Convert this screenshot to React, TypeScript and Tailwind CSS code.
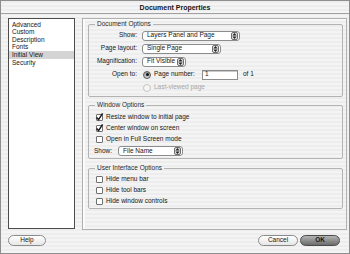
import React from "react";

const font = "font-['Liberation_Sans',Arial,sans-serif]";

const sections = ["Advanced", "Custom", "Description", "Fonts", "Initial View", "Security"];

function Arrows() {
  return (
    <span className="ml-auto mr-[1px] flex h-[8px] w-[7px] items-center justify-center rounded-[2px] border border-[#6e6e6e] bg-[#e2e2e2]">
      <svg width="5" height="6" viewBox="0 0 5 6">
        <path d="M2.5 0L4.6 2.4H0.4Z M2.5 6L0.4 3.6H4.6Z" fill="#222" />
      </svg>
    </span>
  );
}

function Popup({ label, w }: { label: string; w: string }) {
  return (
    <div className={`flex h-[10px] items-center rounded-[3px] border border-[#8c8c8c] bg-white pl-[4px] ${w}`}>
      <span>{label}</span>
      <Arrows />
    </div>
  );
}

function Check({ on, label }: { on?: boolean; label: string }) {
  return (
    <div className="flex h-[11px] items-center">
      <span className="flex h-[7px] w-[7px] items-center justify-center rounded-[1px] border border-[#707070] bg-white">
        {on && (
          <svg width="7" height="7" viewBox="0 0 7 7" className="overflow-visible">
            <path d="M0.6 3.4L2.6 5.6L6.6 -0.6" fill="none" stroke="#1a1a1a" strokeWidth="1.5" />
          </svg>
        )}
      </span>
      <span className="ml-[3px]">{label}</span>
    </div>
  );
}

function Radio({ on, disabled }: { on?: boolean; disabled?: boolean }) {
  return (
    <span
      className={`flex h-[8px] w-[8px] items-center justify-center rounded-full border ${
        disabled ? "border-[#c4c4c4] bg-[#f6f6f6]" : "border-[#5a5a5a] bg-linear-to-b from-[#9c9c9c] to-[#d0d0d0]"
      }`}
    >
      {on && <span className="h-[3px] w-[3px] rounded-full bg-[#111]" />}
    </span>
  );
}

function Group({ title, className, children }: { title: string; className: string; children: React.ReactNode }) {
  return (
    <fieldset className={`ml-[5px] w-[255px] rounded-[2px] border border-[#b3b3b3] ${className}`}>
      <legend className="ml-[6px] px-[2px] leading-[8px] text-[#2a2a2a]">{title}</legend>
      {children}
    </fieldset>
  );
}

export default function App() {
  return (
    <div
      className={`${font} h-[254px] w-[350px] overflow-hidden border border-[#8e8e8e] bg-[image:repeating-linear-gradient(180deg,#ededed_0px,#ededed_2px,#f4f4f4_2px,#f4f4f4_4px)] text-[6.5px] leading-none text-[#161616]`}
    >
      <div className="flex h-[13px] items-center justify-center border-b border-[#a0a0a0] text-[7px] font-bold">
        Document Properties
      </div>

      <div className="mt-[4px] flex pl-[7px]">
        <div className="h-[211px] w-[67px] border border-[#4c4c4c] bg-white pt-[2px]">
          {sections.map((s) => (
            <div
              key={s}
              className={`flex h-[7.6px] items-center pl-[3px] ${s === "Initial View" ? "bg-[#d4d4d4]" : ""}`}
            >
              {s}
            </div>
          ))}
        </div>

        <div className="ml-[7px] h-[212px] w-[265px] border border-[#b0b0b0] pt-[1px] shadow-[inset_2px_1px_0_#fbfbfb]">
          <Group title="Document Options" className="pb-[2px]">
            <div className="mt-[1px] flex flex-col">
              <div className="flex h-[13px] items-center">
                <span className="w-[48px] text-right">Show:</span>
                <span className="ml-[5px]">
                  <Popup label="Layers Panel and Page" w="w-[98px]" />
                </span>
              </div>
              <div className="flex h-[13px] items-center">
                <span className="w-[48px] text-right">Page layout:</span>
                <span className="ml-[5px]">
                  <Popup label="Single Page" w="w-[79px]" />
                </span>
              </div>
              <div className="flex h-[13px] items-center">
                <span className="w-[48px] text-right">Magnification:</span>
                <span className="ml-[5px]">
                  <Popup label="Fit Visible" w="w-[44px]" />
                </span>
              </div>
              <div className="flex h-[13px] items-center">
                <span className="w-[48px] text-right">Open to:</span>
                <span className="ml-[6px]">
                  <Radio on />
                </span>
                <span className="ml-[3px] w-[48px]">Page number:</span>
                <span className="flex h-[10px] w-[36px] items-center border border-[#8c8c8c] bg-white pl-[2px] shadow-[inset_0_1px_0_#c8c8c8]">
                  1
                </span>
                <span className="ml-[5px]">of 1</span>
              </div>
              <div className="flex h-[13px] items-center">
                <span className="ml-[54px]">
                  <Radio disabled />
                </span>
                <span className="ml-[3px] text-[#a6a6a6]">Last-viewed page</span>
              </div>
            </div>
          </Group>

          <Group title="Window Options" className="mt-[4px] pb-[1px]">
            <div className="mt-[3px] flex flex-col pl-[7px]">
              <Check on label="Resize window to initial page" />
              <Check on label="Center window on screen" />
              <Check label="Open in Full Screen mode" />
              <div className="-ml-[2px] flex h-[12px] items-center">
                <span>Show:</span>
                <span className="ml-[6px]">
                  <Popup label="File Name" w="w-[65px]" />
                </span>
              </div>
            </div>
          </Group>

          <Group title="User Interface Options" className="mt-[5px] pb-[1px]">
            <div className="mt-[2px] flex flex-col pl-[7px]">
              <Check label="Hide menu bar" />
              <Check label="Hide tool bars" />
              <Check label="Hide window controls" />
            </div>
          </Group>
        </div>
      </div>

      <div className="mt-[5px] flex h-[11px] items-center pl-[7px] pr-[9px]">
        <button className="flex h-[11px] w-[38px] items-center justify-center rounded-full border border-[#8a8a8a] bg-linear-to-b from-white to-[#e6e6e6]">
          Help
        </button>
        <button className="ml-auto flex h-[11px] w-[40px] items-center justify-center rounded-full border border-[#8a8a8a] bg-linear-to-b from-white to-[#e6e6e6]">
          Cancel
        </button>
        <button className="ml-[2px] flex h-[11px] w-[40px] items-center justify-center rounded-full border border-[#4a4a4a] bg-linear-to-b from-[#b4b4b4] to-[#6c6c6c] font-bold">
          OK
        </button>
      </div>
    </div>
  );
}
